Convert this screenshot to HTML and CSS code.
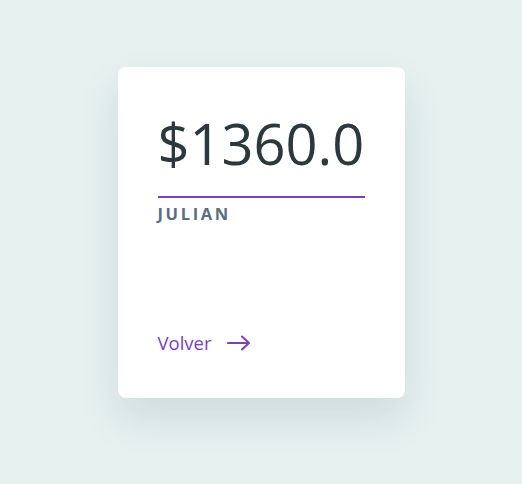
FILE: index.html
```html
<!DOCTYPE html>
<html lang="es">
<head>
<meta charset="utf-8">
<title>Saldo</title>
<link rel="stylesheet" href="styles.css">
</head>
<body>
<main class="page">
  <article class="card">
    <h1 class="amount">$1360.0</h1>
    <p class="name">JULIAN</p>
    <a class="back" href="#">Volver
      <svg class="arrow" width="24" height="16" viewBox="0 0 24 16" aria-hidden="true">
        <path d="M1 8 H22 M15 1.5 L22 8 L15 14.5" fill="none" stroke="currentColor" stroke-width="2" stroke-linecap="round" stroke-linejoin="round"/>
      </svg>
    </a>
  </article>
</main>
</body>
</html>
```
FILE: styles.css
```css
* { box-sizing: border-box; }
html, body { margin: 0; padding: 0; }
body {
  background: #e6f1f0;
  font-family: "Open Sans", "Noto Sans", sans-serif;
  width: 522px;
  height: 484px;
}
.page {
  display: flex;
  justify-content: center;
  padding-top: 67px;
}
.card {
  width: 287px;
  height: 331px;
  background: #ffffff;
  border-radius: 8px;
  padding: 40px;
  display: flex;
  flex-direction: column;
  box-shadow: 0 20px 40px rgba(40, 70, 70, 0.12);
}
.amount {
  margin: 0;
  font-size: 56px;
  font-weight: 400;
  line-height: 72px;
  color: #2b393e;
  padding-bottom: 17px;
  border-bottom: 2px solid #7b3fbf;
}
.name {
  margin: 5px 0 0;
  font-size: 16.5px;
  font-weight: 700;
  letter-spacing: 0.16em;
  color: #5a6e7f;
  line-height: 22px;
}
.back {
  margin-top: auto;
  margin-bottom: 3px;
  display: flex;
  align-items: center;
  gap: 15px;
  color: #7b3fbf;
  text-decoration: none;
  font-size: 18.5px;
  line-height: 24px;
}
.arrow { display: block; }
```
